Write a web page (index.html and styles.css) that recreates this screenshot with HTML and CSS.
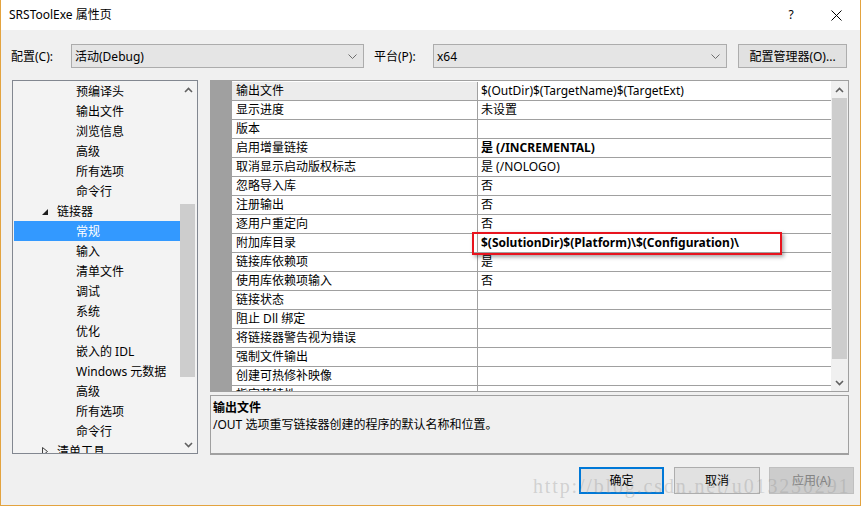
FILE: index.html
```html
<!DOCTYPE html>
<html>
<head>
<meta charset="utf-8">
<link rel="stylesheet" href="styles.css">
</head>
<body>
<div class="window">
  <div class="titlebar">
    <span class="title">SRSToolExe 属性页</span>
    <span class="tb-spacer"></span>
    <span class="help">?</span>
    <span class="close"><svg width="11" height="11" viewBox="0 0 11 11"><path d="M0.5 0.5 L10.5 10.5 M10.5 0.5 L0.5 10.5" stroke="#000" stroke-width="1" fill="none"/></svg></span>
  </div>
  <div class="body">
    <div class="toolbar">
      <span class="lbl lbl-config">配置(C):</span>
      <div class="combo combo-config"><span class="combo-text">活动(Debug)</span><svg class="chev" width="9" height="5" viewBox="0 0 9 5"><path d="M0.5 0.5 L4.5 4.5 L8.5 0.5" stroke="#6d6d6d" fill="none"/></svg></div>
      <span class="lbl lbl-platform">平台(P):</span>
      <div class="combo combo-platform"><span class="combo-text">x64</span><svg class="chev" width="9" height="5" viewBox="0 0 9 5"><path d="M0.5 0.5 L4.5 4.5 L8.5 0.5" stroke="#6d6d6d" fill="none"/></svg></div>
      <div class="btn btn-mgr">配置管理器(O)...</div>
    </div>
    <div class="content">
      <div class="tree">
        <div class="tree-list">
          <div class="tree-item">预编译头</div>
          <div class="tree-item">输出文件</div>
          <div class="tree-item">浏览信息</div>
          <div class="tree-item">高级</div>
          <div class="tree-item">所有选项</div>
          <div class="tree-item">命令行</div>
          <div class="tree-item lvl1"><svg class="tw" width="6" height="6" viewBox="0 0 6 6"><polygon points="6,0 6,6 0,6" fill="#1e1e1e"/></svg>链接器</div>
          <div class="tree-item selected">常规</div>
          <div class="tree-item">输入</div>
          <div class="tree-item">清单文件</div>
          <div class="tree-item">调试</div>
          <div class="tree-item">系统</div>
          <div class="tree-item">优化</div>
          <div class="tree-item">嵌入的 IDL</div>
          <div class="tree-item">Windows 元数据</div>
          <div class="tree-item">高级</div>
          <div class="tree-item">所有选项</div>
          <div class="tree-item">命令行</div>
          <div class="tree-item lvl1"><svg class="tw" width="6" height="9" viewBox="0 0 6 9"><polygon points="0.5,0.5 5.5,4.5 0.5,8.5" fill="none" stroke="#404040"/></svg>清单工具</div>
        </div>
        <div class="vscroll tree-scroll">
          <div class="arrow"><svg width="9" height="6" viewBox="0 0 9 6"><path d="M1 5 L4.5 1.5 L8 5" stroke="#606060" stroke-width="1.6" fill="none"/></svg></div>
          <div class="track"><div class="thumb"></div></div>
          <div class="arrow"><svg width="9" height="6" viewBox="0 0 9 6"><path d="M1 1 L4.5 4.5 L8 1" stroke="#606060" stroke-width="1.6" fill="none"/></svg></div>
        </div>
      </div>
      <div class="right">
        <div class="grid">
          <div class="grid-margin"></div>
          <div class="grid-rows">
            <div class="grow"><div class="gname sel">输出文件</div><div class="gval">$(OutDir)$(TargetName)$(TargetExt)</div></div>
            <div class="grow"><div class="gname">显示进度</div><div class="gval">未设置</div></div>
            <div class="grow"><div class="gname">版本</div><div class="gval"></div></div>
            <div class="grow"><div class="gname">启用增量链接</div><div class="gval bold">是 (/INCREMENTAL)</div></div>
            <div class="grow"><div class="gname">取消显示启动版权标志</div><div class="gval">是 (/NOLOGO)</div></div>
            <div class="grow"><div class="gname">忽略导入库</div><div class="gval">否</div></div>
            <div class="grow"><div class="gname">注册输出</div><div class="gval">否</div></div>
            <div class="grow"><div class="gname">逐用户重定向</div><div class="gval">否</div></div>
            <div class="grow"><div class="gname">附加库目录</div><div class="gval bold marked">$(SolutionDir)$(Platform)\$(Configuration)\<span class="redbox"></span></div></div>
            <div class="grow"><div class="gname">链接库依赖项</div><div class="gval">是</div></div>
            <div class="grow"><div class="gname">使用库依赖项输入</div><div class="gval">否</div></div>
            <div class="grow"><div class="gname">链接状态</div><div class="gval"></div></div>
            <div class="grow"><div class="gname">阻止 Dll 绑定</div><div class="gval"></div></div>
            <div class="grow"><div class="gname">将链接器警告视为错误</div><div class="gval"></div></div>
            <div class="grow"><div class="gname">强制文件输出</div><div class="gval"></div></div>
            <div class="grow"><div class="gname">创建可热修补映像</div><div class="gval"></div></div>
            <div class="grow"><div class="gname">指定节特性</div><div class="gval"></div></div>
          </div>
          <div class="vscroll grid-scroll">
            <div class="arrow"><svg width="9" height="6" viewBox="0 0 9 6"><path d="M1 5 L4.5 1.5 L8 5" stroke="#606060" stroke-width="1.6" fill="none"/></svg></div>
            <div class="track"><div class="thumb"></div></div>
            <div class="arrow"><svg width="9" height="6" viewBox="0 0 9 6"><path d="M1 1 L4.5 4.5 L8 1" stroke="#606060" stroke-width="1.6" fill="none"/></svg></div>
          </div>
        </div>
        <div class="desc">
          <div class="desc-title">输出文件</div>
          <div class="desc-text">/OUT 选项重写链接器创建的程序的默认名称和位置。</div>
        </div>
      </div>
    </div>
    <div class="buttons">
      <div class="btn dlg ok">确定</div>
      <div class="btn dlg cancel">取消</div>
      <div class="btn dlg apply">应用(A)</div>
    </div>
  </div>
  <div class="watermark">http://blog.csdn.net/u013230291</div>
</div>
</body>
</html>
```

FILE: styles.css
```css
* { box-sizing: border-box; }
html, body { margin: 0; padding: 0; background: #ffffff; }
body {
  font-family: "Noto Sans", "Noto Sans CJK SC", sans-serif;
  font-size: 12px;
  color: #000;
}
.window {
  position: relative;
  width: 861px;
  height: 506px;
  border-left: 1px solid #e3a33f;
  border-right: 1px solid #e3a33f;
  border-bottom: 1px solid #e3a33f;
  background: #f0f0f0;
  display: flex;
  flex-direction: column;
  overflow: hidden;
}
.titlebar {
  height: 30px;
  flex: none;
  background: #fff;
  display: flex;
  align-items: center;
  padding-left: 8px;
}
.title { line-height: 16px; }
.tb-spacer { flex: 1; }
.help { width: 12px; text-align: center; line-height: 16px; margin-right: 34px; }
.close { width: 11px; height: 11px; display: flex; margin-right: 18px; }

.body { flex: 1; padding-top: 14px; display: flex; flex-direction: column; }

.toolbar { height: 24px; display: flex; align-items: center; padding-left: 10px; }
.lbl { line-height: 16px; padding-top: 1px; }
.lbl-config { width: 60px; }
.lbl-platform { width: 59px; margin-left: 10px; }
.combo {
  height: 24px;
  border: 1px solid #acacac;
  background: #e5e5e5;
  display: flex;
  align-items: center;
  padding: 0 6px 0 3px;
}
.combo-text { flex: 1; line-height: 16px; padding-top: 1px; }
.combo-config { width: 293px; }
.combo-platform { width: 294px; }
.btn {
  height: 24px;
  border: 1px solid #adadad;
  background: #e1e1e1;
  display: flex;
  align-items: center;
  justify-content: center;
  line-height: 16px;
  padding-top: 1px;
}
.btn-mgr { width: 109px; margin-left: 11px; }

.content { height: 375px; margin-top: 12px; display: flex; padding-left: 11px; gap: 12px; }

.tree {
  width: 186px;
  height: 374px;
  border: 1px solid #828790;
  background: #f3f3f3;
  display: flex;
}
.tree-list { width: 167px; padding-left: 1px; overflow: hidden; }
.tree-item { height: 20px; line-height: 20px; padding-left: 62px; padding-top: 1px; white-space: nowrap; display: flex; align-items: center; }
.tree-item.lvl1 { padding-left: 28px; }
.tree-item .tw { margin-right: 9px; flex: none; }
.tree-item.selected { background: #3399ff; color: #fff; }

.vscroll { width: 17px; display: flex; flex-direction: column; }
.vscroll .arrow { height: 17px; display: flex; align-items: center; justify-content: center; flex: none; }
.vscroll .track { flex: 1; }
.tree-scroll .thumb { width: 15px; height: 173px; margin-top: 106px; background: #cdcdcd; }
.grid-scroll { background: #f0f0f0; }
.grid-scroll .thumb { width: 15px; height: 261px; margin-left: 1px; background: #cdcdcd; }

.right { width: 639px; display: flex; flex-direction: column; gap: 3px; }
.grid {
  height: 312px;
  border: 1px solid #a0a0a0;
  background: #fff;
  display: flex;
  flex: none;
}
.grid-margin { width: 21px; background: #a0a0a0; }
.grid-rows { width: 599px; overflow: hidden; }
.grow { display: flex; height: 19px; border-bottom: 1px solid #a0a0a0; }
.grow:first-child { height: 20px; padding-top: 1px; }
.gname {
  width: 246px;
  border-right: 1px solid #a0a0a0;
  padding-left: 4px;
  line-height: 18px;
  white-space: nowrap;
}
.gname.sel { background: #ececec; }
.gval { flex: 1; padding-left: 3px; line-height: 18px; white-space: nowrap; }
.gval.bold { font-weight: bold; }
.gval.marked { position: relative; }
.redbox {
  position: absolute;
  left: -6px;
  top: -2px;
  width: 310px;
  height: 23px;
  border: 2px solid #e8141e;
  box-shadow: 2px 2px 4px rgba(0, 0, 0, 0.35);
}

.desc {
  height: 60px;
  border: 1px solid #a0a0a0;
  border-bottom: 2px solid #a0a0a0;
  background: #f0f0f0;
  padding: 3px 0 0 2px;
}
.desc-title { font-weight: bold; line-height: 17px; }
.desc-text { line-height: 17px; }

.buttons { display: flex; justify-content: flex-end; margin-top: 12px; padding-right: 6px; }
.btn.dlg { height: 27px; }
.btn.ok { width: 85px; border: 2px solid #0078d7; }
.btn.cancel { width: 86px; margin-left: 10px; }
.btn.apply { width: 85px; margin-left: 9px; background: #cccccc; border-color: #bfbfbf; color: #838383; }

.watermark {
  position: absolute;
  left: 532px;
  top: 475px;
  font-family: "Liberation Serif", serif;
  font-size: 20px;
  line-height: 22px;
  letter-spacing: 1.85px;
  color: rgba(150, 150, 150, 0.35);
  white-space: nowrap;
}
```
